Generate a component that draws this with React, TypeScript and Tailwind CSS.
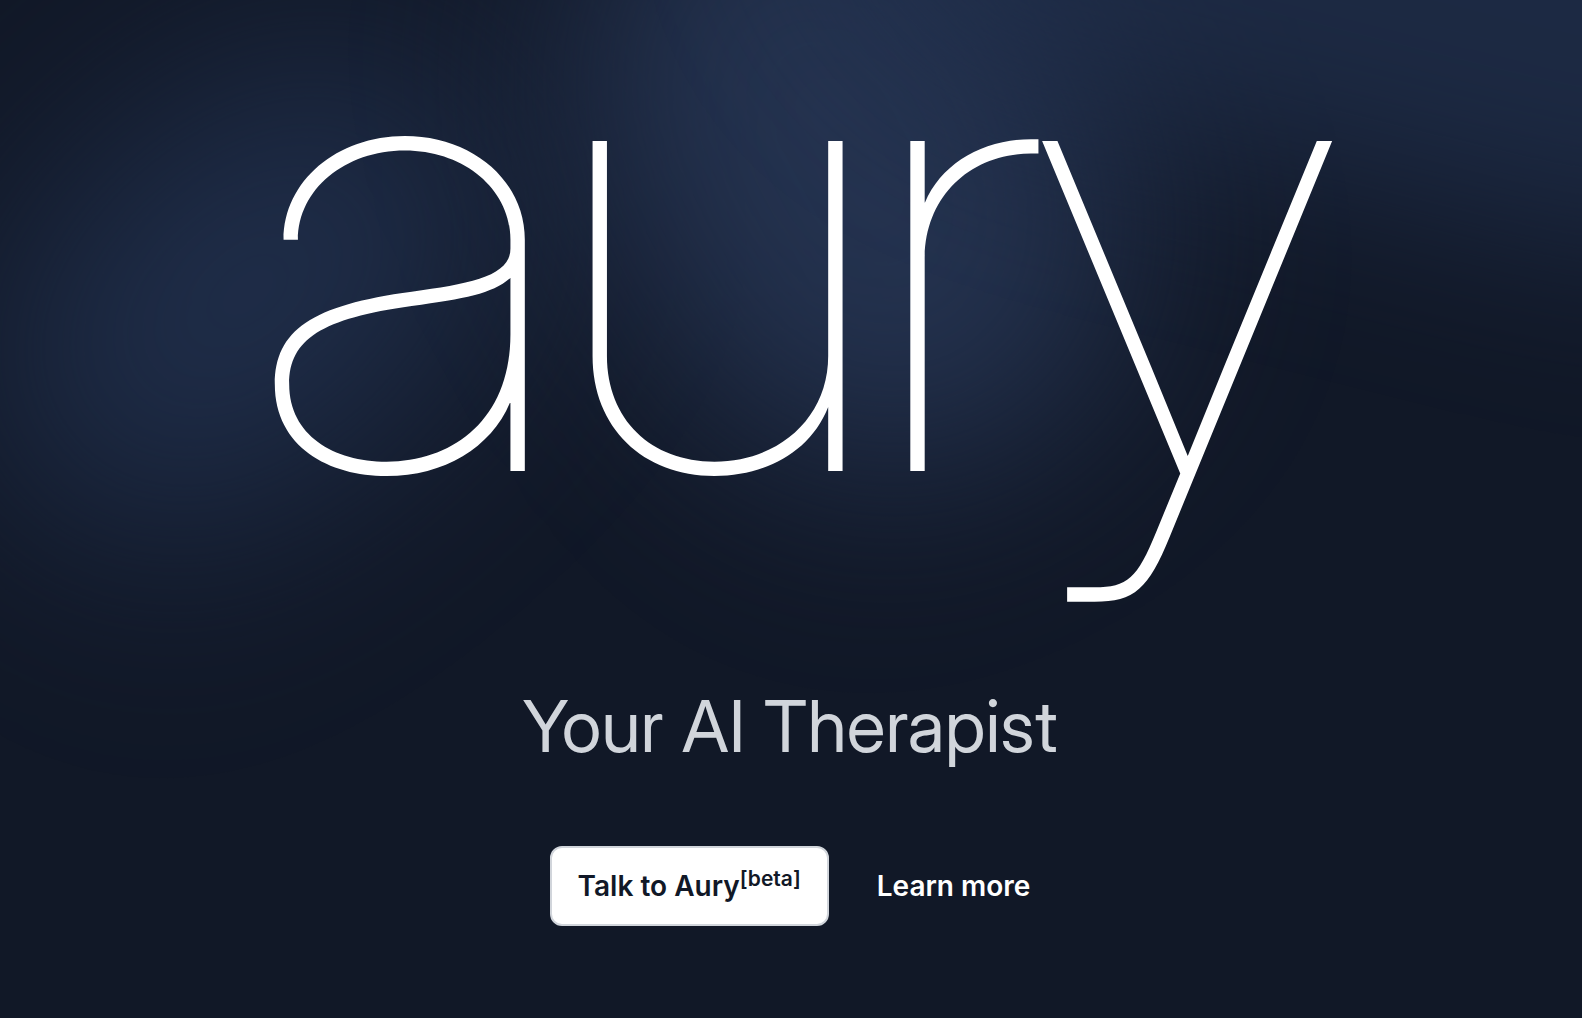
function Glow() {
  return (
    <div aria-hidden="true" className="pointer-events-none absolute inset-0 overflow-hidden">
      <div className="absolute -left-8 top-28 h-[360px] w-[560px] -rotate-40 rounded-full bg-[#233352] opacity-80 blur-[110px]" />
      <div className="absolute -top-44 left-[610px] h-[660px] w-[480px] -rotate-28 rounded-full bg-[#263553] opacity-90 blur-[100px]" />
      <div className="absolute -top-80 left-[820px] h-[500px] w-[1100px] rotate-14 rounded-full bg-[#233352] opacity-65 blur-[90px]" />
    </div>
  );
}

export default function App() {
  return (
    <div className="relative min-h-screen bg-[#111827] font-['Inter',sans-serif]">
      <Glow />
      <main className="relative flex flex-col items-center pr-0.5">
        <h1 className="font-['Inter_Display','Inter',sans-serif] text-[640px] leading-[476px] font-thin tracking-tight text-white">
          aury
        </h1>
        <p className="mt-[214px] font-['Inter_Display','Inter',sans-serif] text-7xl leading-[72px] text-[#d1d5db]">
          Your AI Therapist
        </p>
        <div className="mt-21 flex items-center gap-12 text-[28px] leading-[48px] font-semibold">
          <button
            type="button"
            className="rounded-xl border-2 border-[#d1d5db] bg-white px-[26px] py-3.5 text-[#111827]"
          >
            Talk to Aury<sup>[beta]</sup>
          </button>
          <a href="#about" className="text-white">
            Learn more
          </a>
        </div>
      </main>
    </div>
  );
}
